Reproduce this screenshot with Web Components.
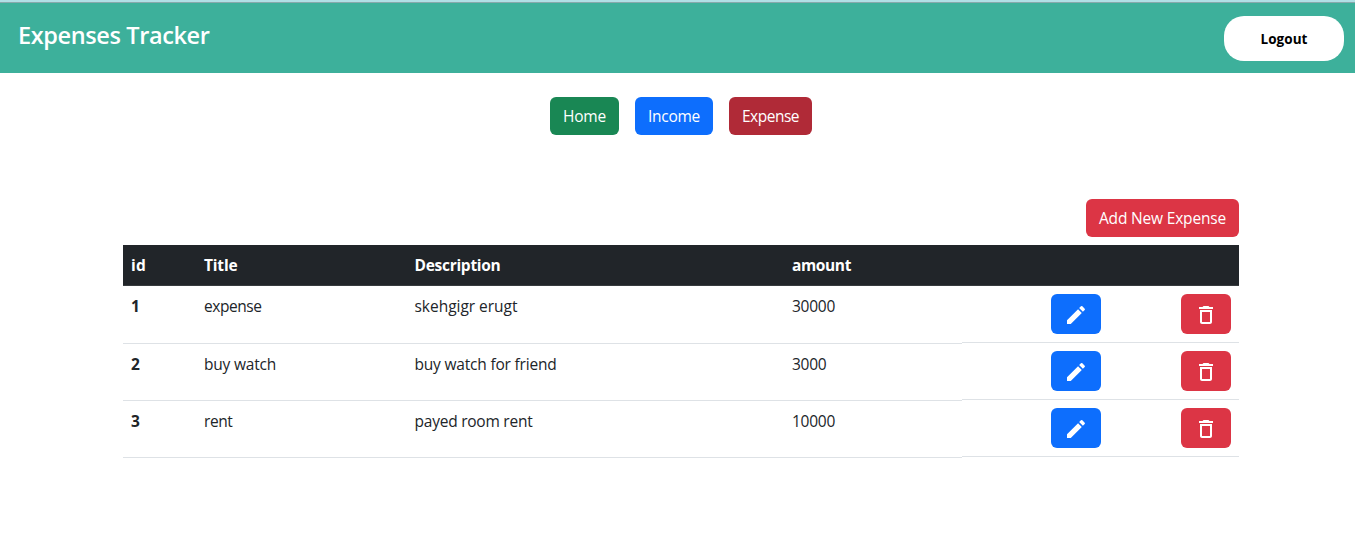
<!DOCTYPE html>
<html lang="en">
<head>
<meta charset="utf-8">
<title>Expenses Tracker</title>
<style>
body{margin:0;background:#fff;color:#212529;font:15.5px/24px "Open Sans","Noto Sans",sans-serif;overflow:hidden}
</style>
</head>
<body>
<expenses-app></expenses-app>
<script>
const define=(name,html,extra)=>{
  const t=document.createElement('template');t.innerHTML=html;
  customElements.define(name,class extends HTMLElement{
    connectedCallback(){
      if(this.shadowRoot)return;
      this.attachShadow({mode:'open'}).append(t.content.cloneNode(true));
      if(extra)extra(this);
    }
  });
};

/* A text label whose tracking is adjusted to a given advance width. */
define('fit-text','<style>:host{display:inline-block;white-space:nowrap;vertical-align:top}</style><slot></slot>',el=>{
  const w=parseFloat(el.getAttribute('w'));
  if(!w)return;
  const n=el.textContent.length;
  el.style.letterSpacing=((w-el.getBoundingClientRect().width)/n).toFixed(3)+'px';
  el.style.width=w+'px';
});

define('app-button',`<style>
:host{display:inline-block}
button{all:unset;box-sizing:border-box;display:block;height:38px;padding:7px 13px;border-radius:6px;background:var(--bg,#0d6efd);color:#fff;cursor:pointer}
:host([icon]) button{width:50px;height:40px;padding:9px 13px 7px}
</style><button><slot></slot></button>`);

define('app-icon',`<style>:host{display:block;width:24px;height:24px}svg{display:block;fill:#fff}</style><svg width="24" height="24" viewBox="0 0 24 24"><path/></svg>`,el=>{
  const icons={
    edit:'M3 17.25V21h3.75L17.81 9.94l-3.75-3.75L3 17.25zM20.71 7.04c.39-.39.39-1.02 0-1.41l-2.34-2.34a.9959.9959 0 0 0-1.41 0l-1.83 1.83 3.75 3.75 1.83-1.83z',
    trash:'M6 19c0 1.1.9 2 2 2h8c1.1 0 2-.9 2-2V7H6v12zM8 9h8v10H8V9zm7.5-5-1-1h-5l-1 1H5v2h14V4z'
  };
  el.shadowRoot.querySelector('path').setAttribute('d',icons[el.getAttribute('name')]);
});

define('app-header',`<style>
:host{display:flex;box-sizing:border-box;height:73px;justify-content:space-between;align-items:flex-start;background:#3db09b;border-top:2px solid #b0e0e6;padding:0 11px 0 18px;box-shadow:inset 0 1px #87a9ac}
h1{margin:18px 0 0;font-size:23.5px;line-height:30px;font-weight:600;color:#fff}
button{all:unset;box-sizing:border-box;width:120px;height:45px;margin-top:14px;padding-top:1px;border-radius:20px;background:#fff;color:#000;font-size:13.5px;line-height:45px;font-weight:700;text-align:center}
</style><h1><fit-text w="191.5">Expenses Tracker</fit-text></h1><button><fit-text w="47">Logout</fit-text></button>`);

define('app-nav',`<style>
:host{display:flex;justify-content:center;gap:16px;padding:24px 0 0 7px}
</style>
<app-button style="--bg:#198754"><fit-text w="43">Home</fit-text></app-button>
<app-button><fit-text w="52">Income</fit-text></app-button>
<app-button style="--bg:#b02a37"><fit-text w="57">Expense</fit-text></app-button>`);

define('expense-row',`<style>
:host{display:grid;grid-template-columns:839px 277px;height:57px}
:host([first]){height:58px}
.cells{display:grid;grid-template-columns:73px 210.5px 377.5px 178px;border-bottom:1px solid #dee2e6;padding-top:8px;box-sizing:border-box}
.cells>*{padding-left:8px}
.id{font-weight:700}
.actions{display:flex;justify-content:flex-end;gap:80px;align-items:flex-start;box-sizing:border-box;height:57px;border-bottom:1px solid #dee2e6;padding:8px 8px 0}
:host(:not([first])) .actions{margin-top:-1px}
</style>
<div class="cells"><div class="id"><slot name="id"></slot></div><div><slot name="title"></slot></div><div><slot name="description"></slot></div><div><slot name="amount"></slot></div></div>
<div class="actions"><app-button icon><app-icon name="edit"></app-icon></app-button><app-button icon style="--bg:#dc3545"><app-icon name="trash"></app-icon></app-button></div>`);

define('expense-table',`<style>
:host{display:block;width:1116px}
.head{display:grid;grid-template-columns:73px 210.5px 377.5px 1fr;box-sizing:border-box;height:41px;padding-top:8px;background:#212529;color:#fff;font-weight:700;border-bottom:1px solid #373b3e}
.head>*{padding-left:8px}
</style>
<div class="head"><div><fit-text w="15">id</fit-text></div><div><fit-text w="33.5">Title</fit-text></div><div><fit-text w="86">Description</fit-text></div><div><fit-text w="59">amount</fit-text></div></div>
<slot></slot>`);

define('expenses-app',`<style>
:host{display:block}
main{width:1116px;margin:64px 0 0 123px}
.bar{display:flex;justify-content:flex-end;margin-bottom:8px}
</style>
<app-header></app-header>
<app-nav></app-nav>
<main>
<div class="bar"><app-button style="--bg:#dc3545"><fit-text w="127">Add New Expense</fit-text></app-button></div>
<expense-table>
<expense-row first><fit-text slot="id" w="9">1</fit-text><fit-text slot="title" w="57.5">expense</fit-text><fit-text slot="description" w="103">skehgigr erugt</fit-text><fit-text slot="amount" w="43">30000</fit-text></expense-row>
<expense-row><fit-text slot="id" w="9">2</fit-text><fit-text slot="title" w="72">buy watch</fit-text><fit-text slot="description" w="142">buy watch for friend</fit-text><fit-text slot="amount" w="34.5">3000</fit-text></expense-row>
<expense-row><fit-text slot="id" w="9">3</fit-text><fit-text slot="title" w="28.5">rent</fit-text><fit-text slot="description" w="118">payed room rent</fit-text><fit-text slot="amount" w="43">10000</fit-text></expense-row>
</expense-table>
</main>`);
</script>
</body>
</html>
